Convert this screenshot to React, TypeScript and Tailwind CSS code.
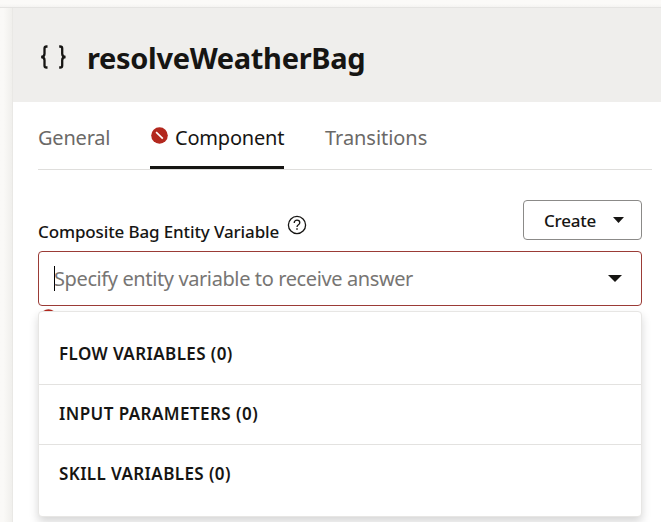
import React from "react";

function Caret({ className }: { className: string }) {
  return (
    <svg viewBox="0 0 14 7" preserveAspectRatio="none" className={className} fill="#161513">
      <path d="M0 0h14L7 7z" />
    </svg>
  );
}

function ErrorIcon({ className }: { className: string }) {
  return (
    <svg viewBox="0 0 17 17" className={className}>
      <circle cx="8.5" cy="8.5" r="8.3" fill="#b3281e" />
      <path d="M5.1 5.2 11.8 11.6" stroke="#fff" strokeWidth="1.7" />
    </svg>
  );
}

function HelpIcon() {
  return (
    <svg viewBox="0 0 20 20" className="ml-2 size-5 shrink-0" fill="none" stroke="#161513" strokeWidth="1.3">
      <circle cx="10" cy="10" r="8.6" />
      <path d="M7.2 7.9c0-1.7 1.2-2.7 2.8-2.7s2.8 1 2.8 2.5c0 2-2.8 2.1-2.8 4.2" />
      <path d="M10 13.2v1.6" strokeWidth="1.5" />
    </svg>
  );
}

const groups = [
  { label: "FLOW VARIABLES (0)", style: "h-[73px] pt-[11px] border-b tracking-[0.4px]" },
  { label: "INPUT PARAMETERS (0)", style: "h-[60px] pb-0.5 border-b tracking-[0.44px]" },
  { label: "SKILL VARIABLES (0)", style: "h-[59px] pb-px tracking-[0.4px]" },
];

export default function App() {
  return (
    <div className="flex h-[522px] w-[661px] flex-col overflow-hidden bg-[#faf9f7] font-['Noto_Sans',sans-serif] text-[#161513]">
      <div className="h-[7px] shrink-0 bg-gradient-to-b from-[#fbfaf8] from-50% to-[#f5f4f2]" />
      <div className="flex flex-1 border-t border-[#e4e3e1]">
        <div className="w-[13px] shrink-0 border-r border-[#e9e8e5] bg-gradient-to-r from-[#faf9f7] from-30% to-[#f0efec]" />
        <main className="flex min-w-0 flex-1 flex-col bg-white">
          <header className="flex h-[94px] shrink-0 items-center bg-[#efeeec] pt-[5px] pl-[27px]">
            <svg viewBox="0 0 27 24" className="-mt-0.5 h-6 w-[27px]" fill="none" stroke="#161513" strokeWidth="2.3">
              <path d="M7.5 1.5H6.6Q4.5 1.5 4.5 3.6V8.8Q4.5 11.8 1.2 12 4.5 12.2 4.5 15.2V20.4Q4.5 22.5 6.6 22.5H7.5" />
              <path d="M19.2 1.5H20.1Q22.2 1.5 22.2 3.6V8.8Q22.2 11.8 25.5 12 22.2 12.2 22.2 15.2V20.4Q22.2 22.5 20.1 22.5H19.2" />
            </svg>
            <h1 className="ml-5 text-[29px] leading-10 font-bold tracking-[-0.32px] whitespace-nowrap">
              <span>resolveWeatherBag</span>
            </h1>
          </header>
          <nav className="mr-[9px] ml-[25px] flex h-[68px] shrink-0 border-b border-[#dfdedc] text-xl leading-7 tracking-[-0.2px] text-[#6b6967]">
            <div className="w-[112px] pt-[22px]"><span>General</span></div>
            <div className="flex h-[67px] w-[134px] items-start border-b-3 border-[#161513] pt-[22px] text-[#161513]">
              <ErrorIcon className="mt-[2.5px] ml-[1px] size-[17px] shrink-0" />
              <span className="ml-[7px]">Component</span>
            </div>
            <div className="pt-[22px] pl-[41px] tracking-[-0.05px]"><span>Transitions</span></div>
          </nav>
          <section className="mr-[19px] ml-[25px] flex flex-1 flex-col">
            <div className="mt-[30px] flex h-10 shrink-0 items-start">
              <label className="mt-5 text-[17px] leading-6 font-medium tracking-[-0.13px] whitespace-nowrap"><span>Composite Bag Entity Variable</span></label>
              <div className="mt-[14.5px]"><HelpIcon /></div>
              <button className="ml-auto flex h-10 w-[119px] items-center rounded border border-[#8b8a88] pl-5 text-[17px] font-medium tracking-[-0.25px]">
                <span className="pt-0.5">Create</span>
                <Caret className="mr-[17px] ml-auto h-[6px] w-[11px]" />
              </button>
            </div>
            <div className="mt-[11px] flex h-[55px] shrink-0 items-center rounded border border-[#9b3b36] pl-[15px]">
              <div className="h-[25px] w-px bg-black" />
              <span className="-ml-px text-xl font-normal tracking-[-0.39px] whitespace-nowrap text-[#777573]">Specify entity variable to receive answer</span>
              <Caret className="mr-[19px] ml-auto h-[7px] w-[14px]" />
            </div>
            <div className="h-[5px] shrink-0 overflow-hidden pt-[3px] pl-[2px]">
              <ErrorIcon className="size-[17px]" />
            </div>
            <div className="h-[206px] shrink-0 rounded border border-[#e7e6e4] bg-white shadow-[0_5px_10px_rgba(0,0,0,0.16)]">
              {groups.map((group) => (
                <div key={group.label} className={`flex items-center border-[#e3e2e0] pl-5 text-[17px] font-semibold whitespace-nowrap ${group.style}`}>
                  <span>{group.label}</span>
                </div>
              ))}
            </div>
          </section>
        </main>
      </div>
    </div>
  );
}
